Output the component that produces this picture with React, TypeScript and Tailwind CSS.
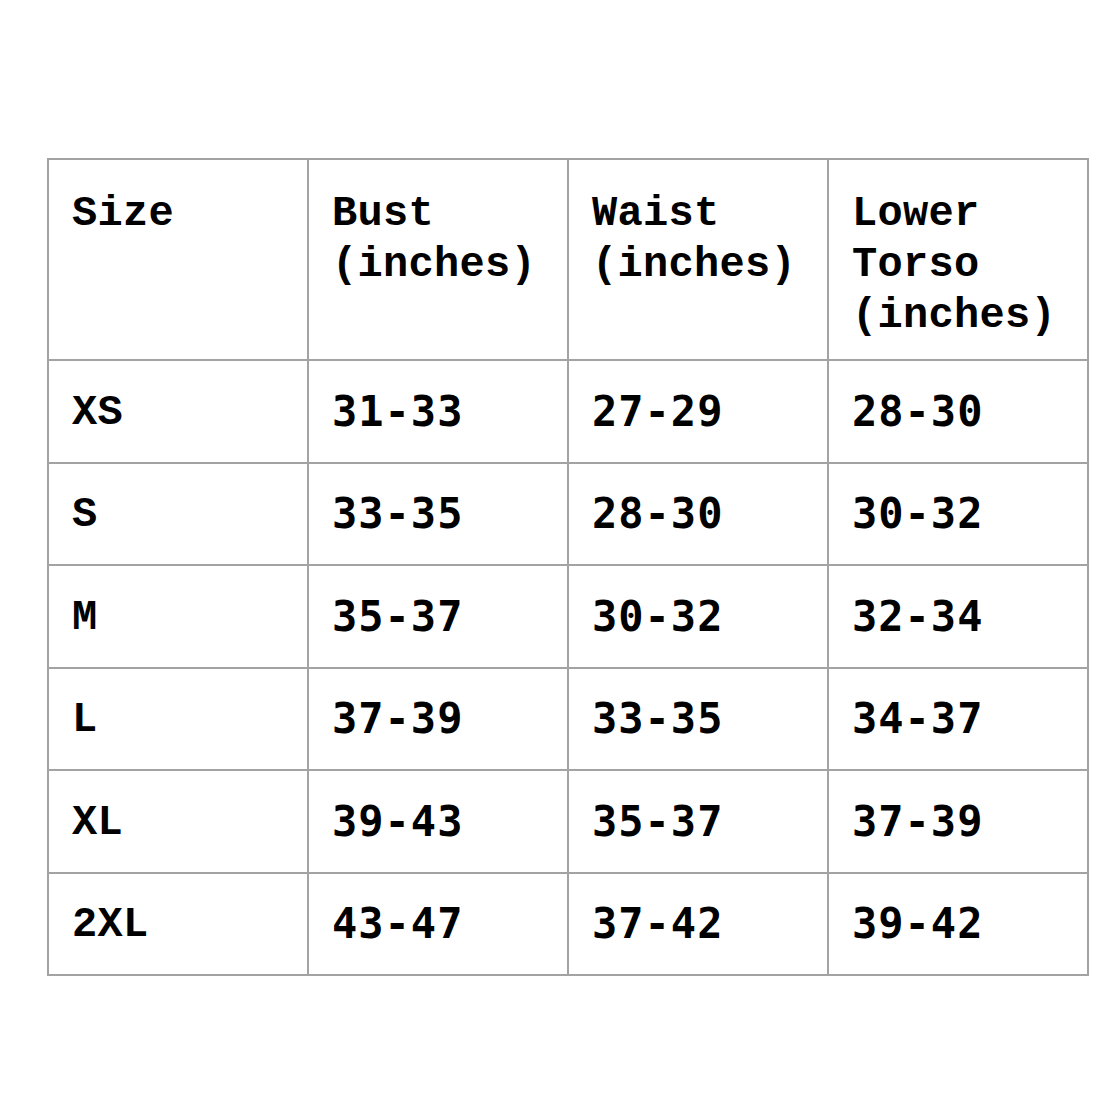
const header = ["Size", "Bust (inches)", "Waist (inches)", "Lower Torso (inches)"];

const rows = [
  ["XS", "31-33", "27-29", "28-30"],
  ["S", "33-35", "28-30", "30-32"],
  ["M", "35-37", "30-32", "32-34"],
  ["L", "37-39", "33-35", "34-37"],
  ["XL", "39-43", "35-37", "37-39"],
  ["2XL", "43-47", "37-42", "39-42"],
];

export default function App() {
  return (
    <div className="w-[1117px] h-[1117px] bg-white pt-[158px] pl-[47px]">
      <table className="border-collapse table-fixed w-[1042px] text-black font-bold font-['Liberation_Mono',monospace]">
        <thead>
          <tr className="h-[201px]">
            {header.map((h) => (
              <th
                key={h}
                className="w-[260px] border-2 border-[#a3a3a3] align-top text-left font-bold pl-[23px] pr-2 pt-[29px] text-[42px] leading-[51px] tracking-[0.3px]"
              >
                {h}
              </th>
            ))}
          </tr>
        </thead>
        <tbody>
          {rows.map((r) => (
            <tr key={r[0]} className="h-[102.5px]">
              {r.map((c, i) => (
                <td
                  key={i}
                  className={
                    "border-2 border-[#a3a3a3] align-middle pl-[23px] text-[42px] leading-[51px] " +
                    (i === 0
                      ? "font-['Liberation_Mono',monospace] pt-[4px] tracking-[0.3px]"
                      : "font-['DejaVu_Sans_Mono',monospace] tracking-[1px]")
                  }
                >
                  {c}
                </td>
              ))}
            </tr>
          ))}
        </tbody>
      </table>
    </div>
  );
}
